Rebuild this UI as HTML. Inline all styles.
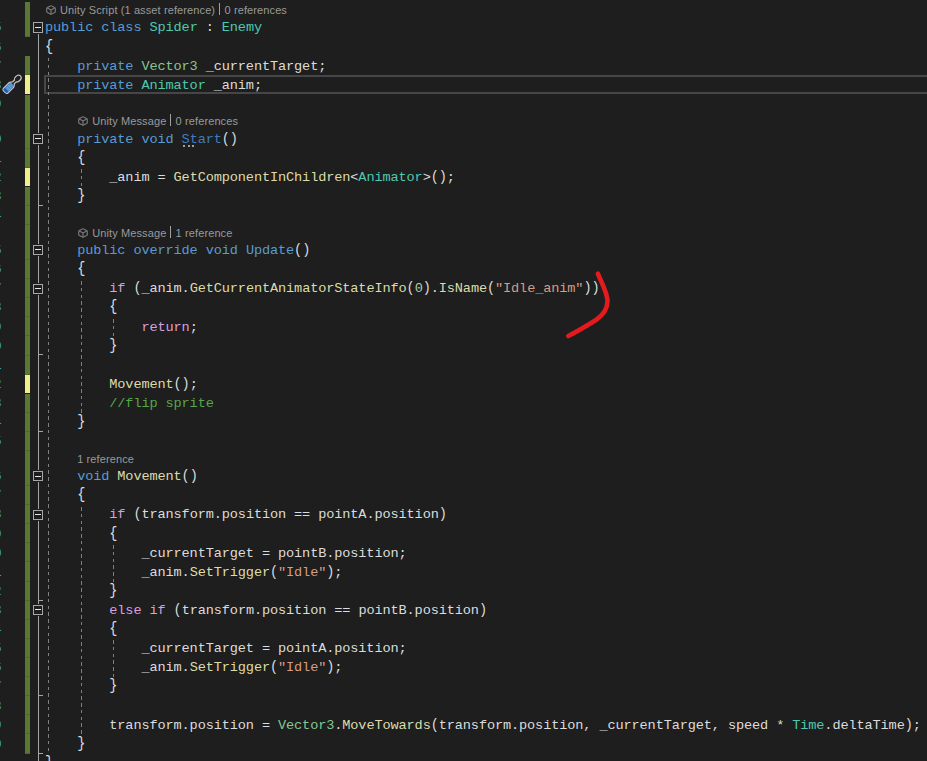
<!DOCTYPE html>
<html><head><meta charset="utf-8"><style>
html,body{margin:0;padding:0;}
body{width:927px;height:761px;overflow:hidden;background:#1E1E1E;position:relative;}
.ln{position:absolute;white-space:pre;font-family:"Liberation Mono",monospace;letter-spacing:-0.124px;font-size:13.6px;line-height:19.11px;height:19.11px;}
.num{position:absolute;white-space:pre;font-family:"Liberation Mono",monospace;font-size:13.6px;line-height:19.11px;color:#38A8C8;text-align:right;width:40px;}
.cl{position:absolute;white-space:pre;font-family:"Liberation Sans",sans-serif;font-size:11px;line-height:14px;color:#9A9A9A;letter-spacing:0.11px;}
.abs{position:absolute;}
b{font-weight:normal;display:inline-block;}
.bc{transform:scaleY(1.16);transform-origin:center 15.1px;}
.pr{transform:scaleY(1.14);transform-origin:center 9.6px;}
.g{position:absolute;width:1px;background:repeating-linear-gradient(to bottom,#808080 0,#808080 3.5px,transparent 3.5px,transparent 6.76px);}
.fb{position:absolute;left:33px;width:10px;height:10px;box-sizing:border-box;border:1px solid #A8A8A8;background:#1E1E1E;}
.fb i{position:absolute;left:1px;top:3.5px;width:6px;height:1.3px;background:#E8E8E8;}
.tk{position:absolute;left:38px;width:5px;height:1px;background:#A5A5A5;}
</style></head><body>

<div class="num" style="top:18.00px;left:-38.40px">5</div>
<div class="num" style="top:38.00px;left:-38.40px">6</div>
<div class="num" style="top:57.00px;left:-38.40px">7</div>
<div class="num" style="top:76.00px;left:-38.40px">8</div>
<div class="num" style="top:95.00px;left:-38.40px">9</div>
<div class="num" style="top:130.00px;left:-38.40px">10</div>
<div class="num" style="top:149.00px;left:-38.40px">11</div>
<div class="num" style="top:168.00px;left:-38.40px">12</div>
<div class="num" style="top:187.00px;left:-38.40px">13</div>
<div class="num" style="top:206.00px;left:-38.40px">14</div>
<div class="num" style="top:241.00px;left:-38.40px">15</div>
<div class="num" style="top:260.00px;left:-38.40px">16</div>
<div class="num" style="top:279.00px;left:-38.40px">17</div>
<div class="num" style="top:298.00px;left:-38.40px">18</div>
<div class="num" style="top:318.00px;left:-38.40px">19</div>
<div class="num" style="top:337.00px;left:-38.40px">20</div>
<div class="num" style="top:356.00px;left:-38.40px">21</div>
<div class="num" style="top:375.00px;left:-38.40px">22</div>
<div class="num" style="top:394.00px;left:-38.40px">23</div>
<div class="num" style="top:413.00px;left:-38.40px">24</div>
<div class="num" style="top:432.00px;left:-38.40px">25</div>
<div class="num" style="top:467.00px;left:-38.40px">26</div>
<div class="num" style="top:486.00px;left:-38.40px">27</div>
<div class="num" style="top:505.00px;left:-38.40px">28</div>
<div class="num" style="top:525.00px;left:-38.40px">29</div>
<div class="num" style="top:544.00px;left:-38.40px">30</div>
<div class="num" style="top:563.00px;left:-38.40px">31</div>
<div class="num" style="top:582.00px;left:-38.40px">32</div>
<div class="num" style="top:601.00px;left:-38.40px">33</div>
<div class="num" style="top:620.00px;left:-38.40px">34</div>
<div class="num" style="top:639.00px;left:-38.40px">35</div>
<div class="num" style="top:658.00px;left:-38.40px">36</div>
<div class="num" style="top:677.00px;left:-38.40px">37</div>
<div class="num" style="top:697.00px;left:-38.40px">38</div>
<div class="num" style="top:716.00px;left:-38.40px">39</div>
<div class="num" style="top:735.00px;left:-38.40px">40</div>
<div class="num" style="top:754.00px;left:-38.40px">41</div>
<div class="abs" style="left:25px;top:2px;width:5px;height:35px;background:#5A7834;box-shadow:inset 0 -1px 0 rgba(0,0,0,0.14)"></div>
<div class="abs" style="left:25px;top:56px;width:5px;height:19px;background:#5A7834;box-shadow:inset 0 -1px 0 rgba(0,0,0,0.14)"></div>
<div class="abs" style="left:25px;top:75px;width:5px;height:19px;background:#EFF08A"></div>
<div class="abs" style="left:25px;top:95px;width:5px;height:19px;background:#5A7834;box-shadow:inset 0 -1px 0 rgba(0,0,0,0.14)"></div>
<div class="abs" style="left:25px;top:113px;width:5px;height:36px;background:#5A7834;box-shadow:inset 0 -1px 0 rgba(0,0,0,0.14)"></div>
<div class="abs" style="left:25px;top:149px;width:5px;height:19px;background:#5A7834;box-shadow:inset 0 -1px 0 rgba(0,0,0,0.14)"></div>
<div class="abs" style="left:25px;top:168px;width:5px;height:18px;background:#EFF08A"></div>
<div class="abs" style="left:25px;top:187px;width:5px;height:19px;background:#5A7834;box-shadow:inset 0 -1px 0 rgba(0,0,0,0.14)"></div>
<div class="abs" style="left:25px;top:206px;width:5px;height:19px;background:#5A7834;box-shadow:inset 0 -1px 0 rgba(0,0,0,0.14)"></div>
<div class="abs" style="left:25px;top:225px;width:5px;height:35px;background:#5A7834;box-shadow:inset 0 -1px 0 rgba(0,0,0,0.14)"></div>
<div class="abs" style="left:25px;top:260px;width:5px;height:19px;background:#5A7834;box-shadow:inset 0 -1px 0 rgba(0,0,0,0.14)"></div>
<div class="abs" style="left:25px;top:279px;width:5px;height:19px;background:#5A7834;box-shadow:inset 0 -1px 0 rgba(0,0,0,0.14)"></div>
<div class="abs" style="left:25px;top:298px;width:5px;height:19px;background:#5A7834;box-shadow:inset 0 -1px 0 rgba(0,0,0,0.14)"></div>
<div class="abs" style="left:25px;top:317px;width:5px;height:19px;background:#5A7834;box-shadow:inset 0 -1px 0 rgba(0,0,0,0.14)"></div>
<div class="abs" style="left:25px;top:336px;width:5px;height:20px;background:#5A7834;box-shadow:inset 0 -1px 0 rgba(0,0,0,0.14)"></div>
<div class="abs" style="left:25px;top:356px;width:5px;height:19px;background:#5A7834;box-shadow:inset 0 -1px 0 rgba(0,0,0,0.14)"></div>
<div class="abs" style="left:25px;top:375px;width:5px;height:18px;background:#EFF08A"></div>
<div class="abs" style="left:25px;top:394px;width:5px;height:19px;background:#5A7834;box-shadow:inset 0 -1px 0 rgba(0,0,0,0.14)"></div>
<div class="abs" style="left:25px;top:413px;width:5px;height:19px;background:#5A7834;box-shadow:inset 0 -1px 0 rgba(0,0,0,0.14)"></div>
<div class="abs" style="left:25px;top:432px;width:5px;height:19px;background:#5A7834;box-shadow:inset 0 -1px 0 rgba(0,0,0,0.14)"></div>
<div class="abs" style="left:25px;top:451px;width:5px;height:35px;background:#5A7834;box-shadow:inset 0 -1px 0 rgba(0,0,0,0.14)"></div>
<div class="abs" style="left:25px;top:486px;width:5px;height:19px;background:#5A7834;box-shadow:inset 0 -1px 0 rgba(0,0,0,0.14)"></div>
<div class="abs" style="left:25px;top:505px;width:5px;height:19px;background:#5A7834;box-shadow:inset 0 -1px 0 rgba(0,0,0,0.14)"></div>
<div class="abs" style="left:25px;top:524px;width:5px;height:19px;background:#5A7834;box-shadow:inset 0 -1px 0 rgba(0,0,0,0.14)"></div>
<div class="abs" style="left:25px;top:543px;width:5px;height:19px;background:#5A7834;box-shadow:inset 0 -1px 0 rgba(0,0,0,0.14)"></div>
<div class="abs" style="left:25px;top:562px;width:5px;height:20px;background:#5A7834;box-shadow:inset 0 -1px 0 rgba(0,0,0,0.14)"></div>
<div class="abs" style="left:25px;top:582px;width:5px;height:19px;background:#5A7834;box-shadow:inset 0 -1px 0 rgba(0,0,0,0.14)"></div>
<div class="abs" style="left:25px;top:601px;width:5px;height:19px;background:#5A7834;box-shadow:inset 0 -1px 0 rgba(0,0,0,0.14)"></div>
<div class="abs" style="left:25px;top:620px;width:5px;height:19px;background:#5A7834;box-shadow:inset 0 -1px 0 rgba(0,0,0,0.14)"></div>
<div class="abs" style="left:25px;top:639px;width:5px;height:19px;background:#5A7834;box-shadow:inset 0 -1px 0 rgba(0,0,0,0.14)"></div>
<div class="abs" style="left:25px;top:658px;width:5px;height:19px;background:#5A7834;box-shadow:inset 0 -1px 0 rgba(0,0,0,0.14)"></div>
<div class="abs" style="left:25px;top:677px;width:5px;height:19px;background:#5A7834;box-shadow:inset 0 -1px 0 rgba(0,0,0,0.14)"></div>
<div class="abs" style="left:25px;top:696px;width:5px;height:19px;background:#5A7834;box-shadow:inset 0 -1px 0 rgba(0,0,0,0.14)"></div>
<div class="abs" style="left:25px;top:715px;width:5px;height:19px;background:#5A7834;box-shadow:inset 0 -1px 0 rgba(0,0,0,0.14)"></div>
<div class="abs" style="left:25px;top:734px;width:5px;height:20px;background:#5A7834;box-shadow:inset 0 -1px 0 rgba(0,0,0,0.14)"></div>
<div class="abs" style="left:38px;top:33.66px;width:1px;height:727.35px;background:#A5A5A5"></div>
<div class="tk" style="top:205px"></div>
<div class="tk" style="top:354px"></div>
<div class="tk" style="top:431px"></div>
<div class="tk" style="top:600px"></div>
<div class="tk" style="top:695px"></div>
<div class="tk" style="top:753px"></div>
<div class="fb" style="top:22px;height:11px;box-shadow:0 0 0 1px #1E1E1E"></div>
<div class="abs" style="left:35px;top:27px;width:6px;height:1px;background:#E6E6E6"></div>
<div class="fb" style="top:134px;height:10px;box-shadow:0 0 0 1px #1E1E1E"></div>
<div class="abs" style="left:35px;top:138px;width:6px;height:1px;background:#E6E6E6"></div>
<div class="fb" style="top:245px;height:10px;box-shadow:0 0 0 1px #1E1E1E"></div>
<div class="abs" style="left:35px;top:249px;width:6px;height:1px;background:#E6E6E6"></div>
<div class="fb" style="top:284px;height:10px;box-shadow:0 0 0 1px #1E1E1E"></div>
<div class="abs" style="left:35px;top:288px;width:6px;height:1px;background:#E6E6E6"></div>
<div class="fb" style="top:471px;height:10px;box-shadow:0 0 0 1px #1E1E1E"></div>
<div class="abs" style="left:35px;top:476px;width:6px;height:1px;background:#E6E6E6"></div>
<div class="fb" style="top:510px;height:10px;box-shadow:0 0 0 1px #1E1E1E"></div>
<div class="abs" style="left:35px;top:514px;width:6px;height:1px;background:#E6E6E6"></div>
<div class="fb" style="top:605px;height:10px;box-shadow:0 0 0 1px #1E1E1E"></div>
<div class="abs" style="left:35px;top:609px;width:6px;height:1px;background:#E6E6E6"></div>
<div class="abs" style="left:44px;top:75px;width:900px;height:19px;box-sizing:border-box;border:2px solid #464646;border-right:none"></div>
<div class="g" style="left:48px;top:58.32px;height:695.23px"></div>
<div class="g" style="left:81px;top:169.20px;height:17.61px"></div>
<div class="g" style="left:81px;top:280.58px;height:132.27px"></div>
<div class="g" style="left:113px;top:318.80px;height:17.61px"></div>
<div class="g" style="left:81px;top:506.62px;height:227.82px"></div>
<div class="g" style="left:113px;top:544.84px;height:36.72px"></div>
<div class="g" style="left:113px;top:640.39px;height:36.72px"></div>
<div class="ln" style="top:18px;left:45.00px"><span style="color:#569CD6">public</span><span style="color:#DCDCDC"> </span><span style="color:#569CD6">class</span><span style="color:#DCDCDC"> </span><span style="color:#4EC9B0">Spider</span><span style="color:#DCDCDC"> : </span><span style="color:#4EC9B0">Enemy</span></div>
<div class="ln" style="top:38px;left:45.00px"><span style="color:#DCDCDC"><b class="bc">{</b></span></div>
<div class="ln" style="top:57px;left:77.14px"><span style="color:#569CD6">private</span><span style="color:#DCDCDC"> </span><span style="color:#86C691">Vector3</span><span style="color:#DCDCDC"> _currentTarget;</span></div>
<div class="ln" style="top:76px;left:77.14px"><span style="color:#569CD6">private</span><span style="color:#DCDCDC"> </span><span style="color:#4EC9B0">Animator</span><span style="color:#DCDCDC"> _anim;</span></div>
<div class="ln" style="top:130px;left:77.14px"><span style="color:#569CD6">private</span><span style="color:#DCDCDC"> </span><span style="color:#569CD6">void</span><span style="color:#DCDCDC"> </span><span style="color:#3F7BBE">Start</span><span style="color:#DCDCDC"><b class="pr">(</b><b class="pr">)</b></span></div>
<div class="ln" style="top:149px;left:77.14px"><span style="color:#DCDCDC"><b class="bc">{</b></span></div>
<div class="ln" style="top:168px;left:109.29px"><span style="color:#DCDCDC">_anim = </span><span style="color:#DCDCAA">GetComponentInChildren</span><span style="color:#DCDCDC">&lt;</span><span style="color:#4EC9B0">Animator</span><span style="color:#DCDCDC">&gt;<b class="pr">(</b><b class="pr">)</b>;</span></div>
<div class="ln" style="top:187px;left:77.14px"><span style="color:#DCDCDC"><b class="bc">}</b></span></div>
<div class="ln" style="top:241px;left:77.14px"><span style="color:#569CD6">public</span><span style="color:#DCDCDC"> </span><span style="color:#569CD6">override</span><span style="color:#DCDCDC"> </span><span style="color:#569CD6">void</span><span style="color:#DCDCDC"> </span><span style="color:#569CD6">Update</span><span style="color:#DCDCDC"><b class="pr">(</b><b class="pr">)</b></span></div>
<div class="ln" style="top:260px;left:77.14px"><span style="color:#DCDCDC"><b class="bc">{</b></span></div>
<div class="ln" style="top:279px;left:109.29px"><span style="color:#D8A0DF">if</span><span style="color:#DCDCDC"> <b class="pr">(</b>_anim.</span><span style="color:#DCDCAA">GetCurrentAnimatorStateInfo</span><span style="color:#DCDCDC"><b class="pr">(</b></span><span style="color:#B5CEA8">0</span><span style="color:#DCDCDC"><b class="pr">)</b>.</span><span style="color:#DCDCAA">IsName</span><span style="color:#DCDCDC"><b class="pr">(</b></span><span style="color:#D69D85">"Idle_anim"</span><span style="color:#DCDCDC"><b class="pr">)</b><b class="pr">)</b></span></div>
<div class="ln" style="top:298px;left:109.29px"><span style="color:#DCDCDC"><b class="bc">{</b></span></div>
<div class="ln" style="top:318px;left:141.43px"><span style="color:#D8A0DF">return</span><span style="color:#DCDCDC">;</span></div>
<div class="ln" style="top:337px;left:109.29px"><span style="color:#DCDCDC"><b class="bc">}</b></span></div>
<div class="ln" style="top:375px;left:109.29px"><span style="color:#DCDCAA">Movement</span><span style="color:#DCDCDC"><b class="pr">(</b><b class="pr">)</b>;</span></div>
<div class="ln" style="top:394px;left:109.29px"><span style="color:#57A64A">//flip sprite</span></div>
<div class="ln" style="top:413px;left:77.14px"><span style="color:#DCDCDC"><b class="bc">}</b></span></div>
<div class="ln" style="top:467px;left:77.14px"><span style="color:#569CD6">void</span><span style="color:#DCDCDC"> </span><span style="color:#DCDCAA">Movement</span><span style="color:#DCDCDC"><b class="pr">(</b><b class="pr">)</b></span></div>
<div class="ln" style="top:486px;left:77.14px"><span style="color:#DCDCDC"><b class="bc">{</b></span></div>
<div class="ln" style="top:505px;left:109.29px"><span style="color:#D8A0DF">if</span><span style="color:#DCDCDC"> <b class="pr">(</b>transform.position == pointA.position<b class="pr">)</b></span></div>
<div class="ln" style="top:525px;left:109.29px"><span style="color:#DCDCDC"><b class="bc">{</b></span></div>
<div class="ln" style="top:544px;left:141.43px"><span style="color:#DCDCDC">_currentTarget = pointB.position;</span></div>
<div class="ln" style="top:563px;left:141.43px"><span style="color:#DCDCDC">_anim.</span><span style="color:#DCDCAA">SetTrigger</span><span style="color:#DCDCDC"><b class="pr">(</b></span><span style="color:#D69D85">"Idle"</span><span style="color:#DCDCDC"><b class="pr">)</b>;</span></div>
<div class="ln" style="top:582px;left:109.29px"><span style="color:#DCDCDC"><b class="bc">}</b></span></div>
<div class="ln" style="top:601px;left:109.29px"><span style="color:#D8A0DF">else</span><span style="color:#DCDCDC"> </span><span style="color:#D8A0DF">if</span><span style="color:#DCDCDC"> <b class="pr">(</b>transform.position == pointB.position<b class="pr">)</b></span></div>
<div class="ln" style="top:620px;left:109.29px"><span style="color:#DCDCDC"><b class="bc">{</b></span></div>
<div class="ln" style="top:639px;left:141.43px"><span style="color:#DCDCDC">_currentTarget = pointA.position;</span></div>
<div class="ln" style="top:658px;left:141.43px"><span style="color:#DCDCDC">_anim.</span><span style="color:#DCDCAA">SetTrigger</span><span style="color:#DCDCDC"><b class="pr">(</b></span><span style="color:#D69D85">"Idle"</span><span style="color:#DCDCDC"><b class="pr">)</b>;</span></div>
<div class="ln" style="top:677px;left:109.29px"><span style="color:#DCDCDC"><b class="bc">}</b></span></div>
<div class="ln" style="top:716px;left:109.29px"><span style="color:#DCDCDC">transform.position = </span><span style="color:#86C691">Vector3</span><span style="color:#DCDCDC">.</span><span style="color:#DCDCAA">MoveTowards</span><span style="color:#DCDCDC"><b class="pr">(</b>transform.position, _currentTarget, speed * </span><span style="color:#4EC9B0">Time</span><span style="color:#DCDCDC">.deltaTime<b class="pr">)</b>;</span></div>
<div class="ln" style="top:735px;left:77.14px"><span style="color:#DCDCDC"><b class="bc">}</b></span></div>
<div class="ln" style="top:754px;left:45.00px"><span style="color:#DCDCDC"><b class="bc">}</b></span></div>
<svg class="abs" style="left:46.0px;top:4.9px" width="10" height="10" viewBox="0 0 10 10"><g fill="none" stroke="#7A7A7A" stroke-width="1.15" stroke-linejoin="round" stroke-linecap="round"><path d="M5 0.7 Q5.4 0.7 8.6 2.5 Q9.3 2.9 9.3 3.6 V6.4 Q9.3 7.1 8.6 7.5 L5.6 9.1 Q5 9.4 4.4 9.1 L1.4 7.5 Q0.7 7.1 0.7 6.4 V3.6 Q0.7 2.9 1.4 2.5 L4.4 0.9 Q4.7 0.7 5 0.7 Z"/><path d="M1.5 3.1 L5 5 L8.5 3.1 M5 5 L5 9"/></g></svg>
<div class="cl" style="left:60.00px;top:2.50px;color:#9A9A9A">Unity Script (1 asset reference)</div>
<div class="abs" style="left:219.00px;top:3.00px;width:1px;height:11.8px;background:#A0A0A0"></div>
<div class="cl" style="left:224.50px;top:2.50px;color:#9A9A9A">0 references</div>
<svg class="abs" style="left:78.0px;top:115.9px" width="10" height="10" viewBox="0 0 10 10"><g fill="none" stroke="#7A7A7A" stroke-width="1.15" stroke-linejoin="round" stroke-linecap="round"><path d="M5 0.7 Q5.4 0.7 8.6 2.5 Q9.3 2.9 9.3 3.6 V6.4 Q9.3 7.1 8.6 7.5 L5.6 9.1 Q5 9.4 4.4 9.1 L1.4 7.5 Q0.7 7.1 0.7 6.4 V3.6 Q0.7 2.9 1.4 2.5 L4.4 0.9 Q4.7 0.7 5 0.7 Z"/><path d="M1.5 3.1 L5 5 L8.5 3.1 M5 5 L5 9"/></g></svg>
<div class="cl" style="left:92.20px;top:113.50px;color:#9A9A9A">Unity Message</div>
<div class="abs" style="left:170.00px;top:114.00px;width:1px;height:11.8px;background:#A0A0A0"></div>
<div class="cl" style="left:175.60px;top:113.50px;color:#9A9A9A">0 references</div>
<svg class="abs" style="left:78.0px;top:227.9px" width="10" height="10" viewBox="0 0 10 10"><g fill="none" stroke="#7A7A7A" stroke-width="1.15" stroke-linejoin="round" stroke-linecap="round"><path d="M5 0.7 Q5.4 0.7 8.6 2.5 Q9.3 2.9 9.3 3.6 V6.4 Q9.3 7.1 8.6 7.5 L5.6 9.1 Q5 9.4 4.4 9.1 L1.4 7.5 Q0.7 7.1 0.7 6.4 V3.6 Q0.7 2.9 1.4 2.5 L4.4 0.9 Q4.7 0.7 5 0.7 Z"/><path d="M1.5 3.1 L5 5 L8.5 3.1 M5 5 L5 9"/></g></svg>
<div class="cl" style="left:92.20px;top:225.50px;color:#9A9A9A">Unity Message</div>
<div class="abs" style="left:170.00px;top:226.00px;width:1px;height:11.8px;background:#A0A0A0"></div>
<div class="cl" style="left:175.60px;top:225.50px;color:#9A9A9A">1 reference</div>
<div class="cl" style="left:77.20px;top:451.50px;color:#9A9A9A">1 reference</div>
<div class="abs" style="left:183.0px;top:145px;width:2px;height:2px;background:#A0A0A0"></div>
<div class="abs" style="left:187.5px;top:145px;width:2px;height:2px;background:#A0A0A0"></div>
<div class="abs" style="left:192.0px;top:145px;width:2px;height:2px;background:#A0A0A0"></div>
<svg class="abs" style="left:0;top:68px" width="26" height="30" viewBox="0 68 26 30">
<g transform="translate(4.7 91.6) rotate(-45)">
<path d="M1.6 -3.2 H9.4 Q10.4 -3.2 11.1 -2.3 L12.3 -1.3 H15.0 Q15.6 -2.8 18.4 -2.8 Q22.2 -2.8 22.2 0 Q22.2 2.8 18.4 2.8 Q15.6 2.8 15.0 1.3 H12.3 L11.1 2.3 Q10.4 3.2 9.4 3.2 H1.6 Q-0.3 3.2 -0.3 1.4 V-1.4 Q-0.3 -3.2 1.6 -3.2 Z" fill="#1E1E1E" stroke="#C4C4C4" stroke-width="1.3"/>
<path d="M1.6 -2.6 H9.7 L10.8 -1.8 V1.8 L9.7 2.6 H1.6 Q0.3 2.6 0.3 1.4 V-1.4 Q0.3 -2.6 1.6 -2.6 Z" fill="#4F8ED3"/>
<path d="M1.6 -2.6 H2.6 V2.6 H1.6 Q0.3 2.6 0.3 1.4 V-1.4 Q0.3 -2.6 1.6 -2.6 Z" fill="#1D5CAA"/>
<path d="M4.6 -2.6 V2.6 M7.2 -2.6 V2.6 M9.6 -2.6 V2.6" stroke="#86B2E0" stroke-width="0.7"/>
<ellipse cx="18.5" cy="0" rx="2.6" ry="1.4" fill="#202020"/>
</g></svg>
<svg class="abs" style="left:0;top:0" width="927" height="761"><path d="M597.9 273.6 C602 284, 607.6 293, 607.5 301.5 C607.3 309.5, 602.5 315.5, 596 320 C588 325, 578 331, 568.3 336" fill="none" stroke="#E31B1F" stroke-width="4.6" stroke-linecap="round"/></svg>
</body></html>
